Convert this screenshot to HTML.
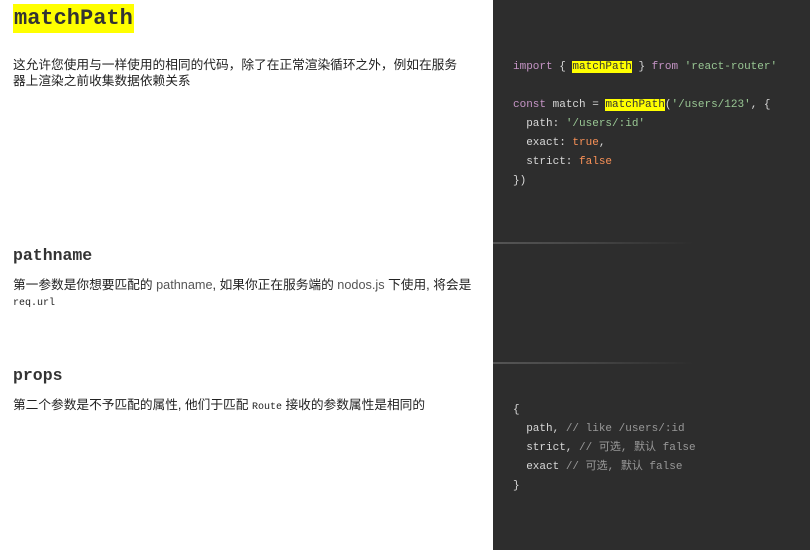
<!DOCTYPE html>
<html><head><meta charset="utf-8"><style>
*{margin:0;padding:0;box-sizing:border-box}
body{width:810px;height:550px;background:#fff;position:relative;overflow:hidden;font-family:"Liberation Sans","Noto Sans CJK SC",sans-serif;color:#222}
.dark{position:absolute;left:493px;top:0;width:317px;height:550px;background:#2d2d2d}
.sep{position:absolute;left:493px;width:200px;height:2px;background:linear-gradient(90deg,#555,#444 50%,#2d2d2d)}
.code{position:absolute;left:513px;font-family:"Liberation Mono","Noto Sans CJK SC",monospace;font-size:11px;line-height:19px;color:#d8d8d8;white-space:pre}
.hl{background:#ff0;color:#333}
.k{color:#c594c5}.s{color:#99c794}.o{color:#f99157}.c{color:#999}
h1{position:absolute;left:13px;top:4px;height:29px;background:#ff0;padding:0 1px;font-family:"Liberation Mono",monospace;font-size:22px;line-height:29px;font-weight:bold;color:#333}
h2{position:absolute;left:13px;font-family:"Liberation Mono",monospace;font-size:16.5px;font-weight:bold;color:#333}
p{position:absolute;left:13px;font-size:12.7px;line-height:16px;color:#222;white-space:nowrap}
.g{color:#555}
.m{font-family:"Liberation Mono",monospace;font-size:10px}
</style></head><body>
<h1>matchPath</h1>
<p style="top:57px">这允许您使用与一样使用的相同的代码，除了在正常渲染循环之外，例如在服务<br>器上渲染之前收集数据依赖关系</p>
<h2 style="top:246px">pathname</h2>
<p style="top:277px">第一参数是你想要匹配的 <span class="g">pathname</span>, 如果你正在服务端的 <span class="g">nodos.js</span> 下使用, 将会是<br><span class="m">req.url</span></p>
<h2 style="top:366px">props</h2>
<p style="top:397px">第二个参数是不予匹配的属性, 他们于匹配 <span class="m">Route</span> 接收的参数属性是相同的</p>
<div class="dark"></div>
<div class="sep" style="top:242px"></div>
<div class="sep" style="top:362px"></div>
<div class="code" style="top:58px"><span class="k">import</span> { <span class="hl">matchPath</span> } <span class="k">from</span> <span class="s">'react-router'</span>

<span class="k">const</span> match = <span class="hl">matchPath</span>(<span class="s">'/users/123'</span>, {
  path: <span class="s">'/users/:id'</span>
  exact: <span class="o">true</span>,
  strict: <span class="o">false</span>
})</div>
<div class="code" style="top:401px">{
  path, <span class="c">// like /users/:id</span>
  strict, <span class="c">// 可选, 默认 false</span>
  exact <span class="c">// 可选, 默认 false</span>
}</div>
</body></html>
